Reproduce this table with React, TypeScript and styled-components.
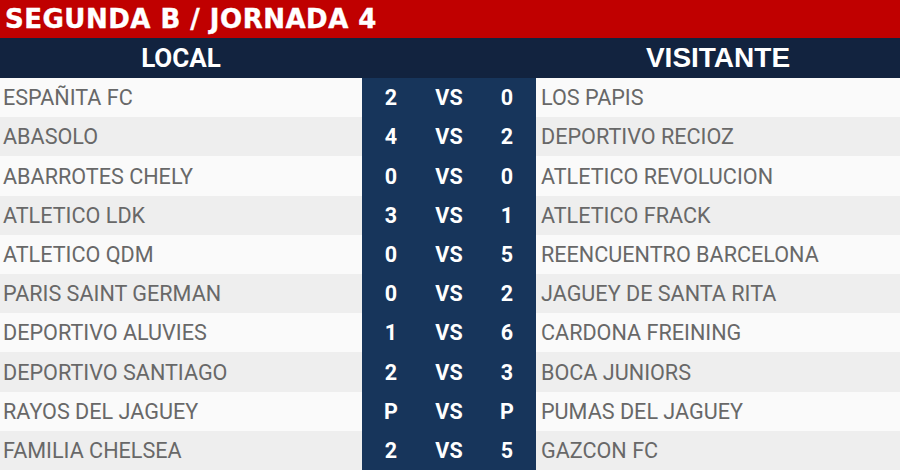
import React, { FC } from 'react'
import styled, { createGlobalStyle } from 'styled-components'

const red = '#c00000'
const navy = '#12233f'
const scoreBlue = '#17355b'
const rowLight = '#fafafa'
const rowDark = '#eeeeee'
const nameGrey = '#686868'

const GlobalStyle = createGlobalStyle`
  html, body {
    margin: 0;
    padding: 0;
    background: ${rowLight};
    overflow: hidden;
  }
`

const Board = styled.div`
  width: 900px;
  height: 470px;
  display: flex;
  flex-direction: column;
  font-family: Roboto, 'Liberation Sans', sans-serif;
`

const TitleBar = styled.div`
  height: 38px;
  background-color: ${red};
  display: flex;
  align-items: center;
  padding-left: 5px;
  color: #fff;
  font-family: 'DejaVu Sans', sans-serif;
  font-weight: 700;
  font-size: 26px;
  letter-spacing: 0.5px;
  -webkit-text-stroke: 0.4px #fff;
`

const HeaderRow = styled.div`
  height: 40px;
  background-color: ${navy};
  display: grid;
  grid-template-columns: 362px 174px 1fr;
  align-items: center;
  color: #fff;
`

const HeaderCell = styled.div<{ arial?: boolean }>`
  text-align: center;
  font-weight: 700;
  font-size: ${({ arial }) => (arial ? '28px' : '26px')};
  font-family: ${({ arial }) =>
    arial ? "'Liberation Sans', Arial, sans-serif" : "Roboto, sans-serif"};
`

const Rows = styled.div`
  flex: 1;
  display: flex;
  flex-direction: column;
`

const MatchRow = styled.div<{ shaded: boolean }>`
  flex: 1;
  display: grid;
  grid-template-columns: 362px 174px 1fr;
  background-color: ${({ shaded }) => (shaded ? rowDark : rowLight)};
`

const TeamName = styled.div<{ away?: boolean }>`
  display: flex;
  align-items: center;
  padding-left: ${({ away }) => (away ? '5px' : '3px')};
  font-size: 21.6px;
  color: ${nameGrey};
  white-space: nowrap;
`

const Score = styled.div`
  background-color: ${scoreBlue};
  display: grid;
  grid-template-columns: repeat(3, 1fr);
  align-items: center;
  color: #fff;
  font-weight: 700;
  font-size: 21.5px;
  text-align: center;
`

interface Match {
  home: string
  away: string
  hs: string
  as: string
}

const matches: Match[] = [
  { home: 'ESPAÑITA FC', hs: '2', as: '0', away: 'LOS PAPIS' },
  { home: 'ABASOLO', hs: '4', as: '2', away: 'DEPORTIVO RECIOZ' },
  { home: 'ABARROTES CHELY', hs: '0', as: '0', away: 'ATLETICO REVOLUCION' },
  { home: 'ATLETICO LDK', hs: '3', as: '1', away: 'ATLETICO FRACK' },
  { home: 'ATLETICO QDM', hs: '0', as: '5', away: 'REENCUENTRO BARCELONA' },
  { home: 'PARIS SAINT GERMAN', hs: '0', as: '2', away: 'JAGUEY DE SANTA RITA' },
  { home: 'DEPORTIVO ALUVIES', hs: '1', as: '6', away: 'CARDONA FREINING' },
  { home: 'DEPORTIVO SANTIAGO', hs: '2', as: '3', away: 'BOCA JUNIORS' },
  { home: 'RAYOS DEL JAGUEY', hs: 'P', as: 'P', away: 'PUMAS DEL JAGUEY' },
  { home: 'FAMILIA CHELSEA', hs: '2', as: '5', away: 'GAZCON FC' },
]

const App: FC = () => {
  return (
    <>
      <GlobalStyle />
      <Board>
        <TitleBar>SEGUNDA B / JORNADA 4</TitleBar>
        <HeaderRow>
          <HeaderCell>LOCAL</HeaderCell>
          <div />
          <HeaderCell arial>VISITANTE</HeaderCell>
        </HeaderRow>
        <Rows>
          {matches.map((m, i) => (
            <MatchRow key={m.home} shaded={i % 2 === 1}>
              <TeamName>{m.home}</TeamName>
              <Score>
                <span>{m.hs}</span>
                <span>VS</span>
                <span>{m.as}</span>
              </Score>
              <TeamName away>{m.away}</TeamName>
            </MatchRow>
          ))}
        </Rows>
      </Board>
    </>
  )
}

export default App
